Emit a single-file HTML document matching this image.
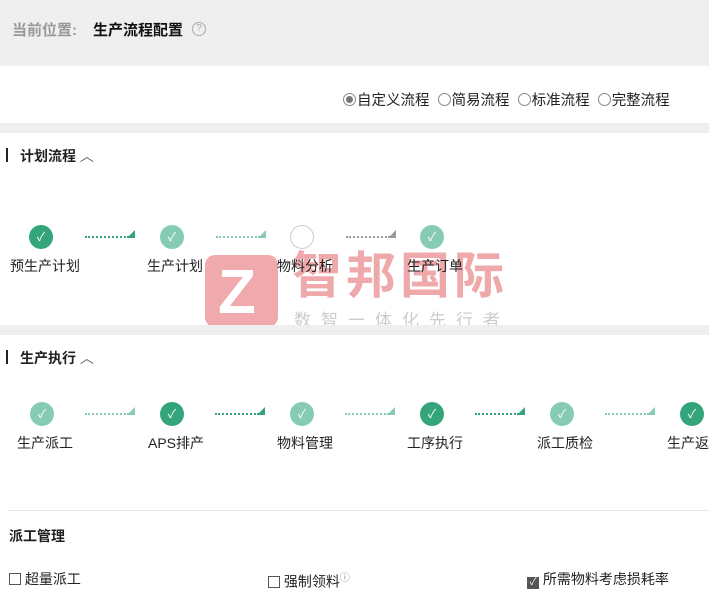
<!DOCTYPE html><html><head><meta charset="utf-8"><style>
*{margin:0;padding:0;box-sizing:border-box}
body{width:709px;height:583px;overflow:hidden;background:#fff;font-family:"Liberation Sans","Noto Sans CJK SC",sans-serif;font-size:14px;color:#222;position:relative}
.a{position:absolute}
.c{position:absolute;width:24px;height:24px;border-radius:50%;color:#fff;font-size:12px;text-align:center;line-height:24px}
.d{background:#34a57b}.l{background:#86ccb2}
.o{border:1px solid #ccc;background:#fff}
.ar{position:absolute;height:2px;width:44px;border-top:2px dotted}
.tri{position:absolute;width:0;height:0;border-left:8px solid transparent;border-bottom:8px solid}
.lab{position:absolute;font-size:14px;white-space:nowrap}
.rad{display:inline-block;width:13px;height:13px;border:1px solid #888;border-radius:50%;vertical-align:-1px;margin-right:1px;position:relative}
</style></head><body>
<div class="a" style="left:205px;top:255px;width:73px;height:72px;background:#eea0a3;border-radius:10px;opacity:.9"></div>
<div class="a" style="left:218px;top:262px;font-size:62px;font-weight:bold;color:#fff;line-height:62px">Z</div>
<div class="a" style="left:292px;top:248px;font-size:50px;font-weight:bold;color:#eea0a3;letter-spacing:4px;line-height:56px;opacity:.9">智邦国际</div>
<div class="a" style="left:294px;top:306px;font-size:17px;color:#ccc;letter-spacing:10px">数智一体化先行者</div>

<div class="a" style="left:0;top:0;width:709px;height:66px;background:#efefef"></div>
<div class="a" style="left:12px;top:19px;font-size:15px;color:#999;font-weight:bold">当前位置:</div>
<div class="a" style="left:93px;top:19px;font-size:15px;font-weight:bold;color:#111">生产流程配置</div>
<div class="a" style="left:192px;top:22px;width:14px;height:14px;border:1px solid #aaa;border-radius:50%;font-size:10px;color:#aaa;text-align:center;line-height:12px">?</div>
<div class="a" style="left:343px;top:89px;font-size:14.5px;white-space:nowrap;word-spacing:0">
<span class="rad"><span style="position:absolute;left:2px;top:2px;width:7px;height:7px;border-radius:50%;background:#777"></span></span>自定义流程&nbsp;&nbsp;<span class="rad"></span>简易流程&nbsp;&nbsp;<span class="rad"></span>标准流程&nbsp;&nbsp;<span class="rad"></span>完整流程</div>
<div class="a" style="left:0;top:123px;width:709px;height:10px;background:#efefef"></div>
<div class="a" style="left:6px;top:148px;width:2px;height:14px;background:#222"></div>
<div class="a" style="left:20px;top:146px;font-weight:bold;font-size:14px">计划流程 <span style="font-weight:normal;color:#666">︿</span></div>

<div class="c d" style="left:29px;top:225px">✓</div>
<div class="c l" style="left:160px;top:225px">✓</div>
<div class="c o" style="left:290px;top:225px"></div>
<div class="c l" style="left:420px;top:225px">✓</div>
<div class="ar" style="left:85px;top:236px;border-color:#34a57b"></div><div class="tri" style="left:127px;top:230px;border-bottom-color:#34a57b"></div>
<div class="ar" style="left:216px;top:236px;border-color:#86ccb2"></div><div class="tri" style="left:258px;top:230px;border-bottom-color:#86ccb2"></div>
<div class="ar" style="left:346px;top:236px;border-color:#999"></div><div class="tri" style="left:388px;top:230px;border-bottom-color:#999"></div>
<div class="lab" style="left:10px;top:256px">预生产计划</div>
<div class="lab" style="left:147px;top:256px">生产计划</div>
<div class="lab" style="left:277px;top:256px">物料分析</div>
<div class="lab" style="left:407px;top:256px">生产订单</div>

<div class="a" style="left:0;top:325px;width:709px;height:10px;background:#efefef"></div>
<div class="a" style="left:6px;top:350px;width:2px;height:14px;background:#222"></div>
<div class="a" style="left:20px;top:348px;font-weight:bold;font-size:14px">生产执行 <span style="font-weight:normal;color:#666">︿</span></div>

<div class="c l" style="left:30px;top:402px">✓</div>
<div class="c d" style="left:160px;top:402px">✓</div>
<div class="c l" style="left:290px;top:402px">✓</div>
<div class="c d" style="left:420px;top:402px">✓</div>
<div class="c l" style="left:550px;top:402px">✓</div>
<div class="c d" style="left:680px;top:402px">✓</div>
<div class="ar" style="left:85px;top:413px;border-color:#86ccb2"></div><div class="tri" style="left:127px;top:407px;border-bottom-color:#86ccb2"></div>
<div class="ar" style="left:215px;top:413px;border-color:#34a57b"></div><div class="tri" style="left:257px;top:407px;border-bottom-color:#34a57b"></div>
<div class="ar" style="left:345px;top:413px;border-color:#86ccb2"></div><div class="tri" style="left:387px;top:407px;border-bottom-color:#86ccb2"></div>
<div class="ar" style="left:475px;top:413px;border-color:#34a57b"></div><div class="tri" style="left:517px;top:407px;border-bottom-color:#34a57b"></div>
<div class="ar" style="left:605px;top:413px;border-color:#86ccb2"></div><div class="tri" style="left:647px;top:407px;border-bottom-color:#86ccb2"></div>
<div class="lab" style="left:17px;top:433px">生产派工</div>
<div class="lab" style="left:148px;top:433px">APS排产</div>
<div class="lab" style="left:277px;top:433px">物料管理</div>
<div class="lab" style="left:407px;top:433px">工序执行</div>
<div class="lab" style="left:537px;top:433px">派工质检</div>
<div class="lab" style="left:667px;top:433px">生产返工</div>

<div class="a" style="left:8px;top:510px;width:701px;height:1px;background:#e6e6e6"></div>
<div class="a" style="left:9px;top:526px;font-weight:bold;font-size:14px">派工管理</div>
<div class="a" style="left:9px;top:569px;white-space:nowrap"><span style="display:inline-block;width:12px;height:12px;border:1px solid #555;vertical-align:-1px"></span> 超量派工</div>
<div class="a" style="left:268px;top:569px;white-space:nowrap"><span style="display:inline-block;width:12px;height:12px;border:1px solid #555;vertical-align:-1px"></span> 强制领料<sup style="font-size:10px;color:#888">ⓘ</sup></div>
<div class="a" style="left:527px;top:569px;white-space:nowrap"><span style="display:inline-block;width:12px;height:12px;background:#555;color:#fff;font-size:10px;line-height:12px;text-align:center;vertical-align:-1px">✓</span> 所需物料考虑损耗率</div>
</body></html>
